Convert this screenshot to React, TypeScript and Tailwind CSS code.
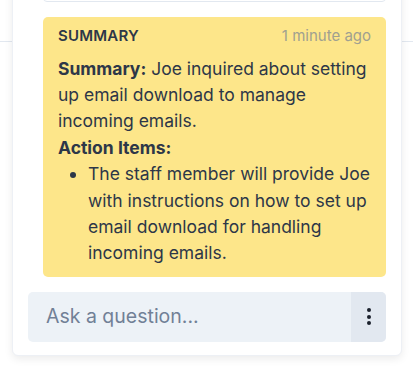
import React from "react";

export default function App() {
  const font = { fontFamily: "Inter, 'Noto Sans', sans-serif" };
  return (
    <div className="relative w-[413px] h-[367px] overflow-hidden bg-white" style={font}>
      <div className="h-[42px] border-b border-[#e2e8f0]" />
      <div className="absolute left-[12px] top-[-60px] w-[390px] bottom-[11px] bg-white border border-[#edf0f5] rounded-b-[6px] shadow-[0_3px_8px_rgba(0,0,0,0.08)] flex flex-col px-[15px] pb-[15px]">
        <div className="ml-[15px] h-[61px] shrink-0 border border-[#e2e8f0] rounded-[4px]" />
        <div className="ml-[15px] mt-[15px] shrink-0 bg-[#fde68a] rounded-[5px] px-[15px] pt-[8px] pb-[10px] text-[#2d3748]">
          <div className="flex items-baseline justify-between">
            <span className="text-[15px] font-semibold tracking-[0.2px]">SUMMARY</span>
            <span className="text-[15px] text-[#a0a090]">1 minute ago</span>
          </div>
          <div className="mt-[8px] text-[17.5px] leading-[26.4px]">
            <p>
              <span className="font-bold">Summary:</span> Joe inquired about setting up email download to manage incoming emails.
            </p>
            <p className="font-bold">Action Items:</p>
            <ul className="list-disc pl-[30px]">
              <li>
                The staff member will provide Joe with instructions on how to set up email download for handling incoming emails.
              </li>
            </ul>
          </div>
        </div>
        <div className="mt-[15px] h-[50px] shrink-0 flex rounded-[5px] overflow-hidden bg-[#edf2f7]">
          <input
            className="flex-1 min-w-0 bg-transparent outline-none pl-[18px] text-[19.5px] text-[#2d3748] placeholder:text-[#718096]"
            placeholder="Ask a question..."
            style={font}
          />
          <button className="w-[35px] bg-[#e2e8f0] flex flex-col items-center justify-center gap-[2.5px]">
            <span className="w-[4px] h-[4px] rounded-full bg-[#1a202c]" />
            <span className="w-[4px] h-[4px] rounded-full bg-[#1a202c]" />
            <span className="w-[4px] h-[4px] rounded-full bg-[#1a202c]" />
          </button>
        </div>
      </div>
    </div>
  );
}
